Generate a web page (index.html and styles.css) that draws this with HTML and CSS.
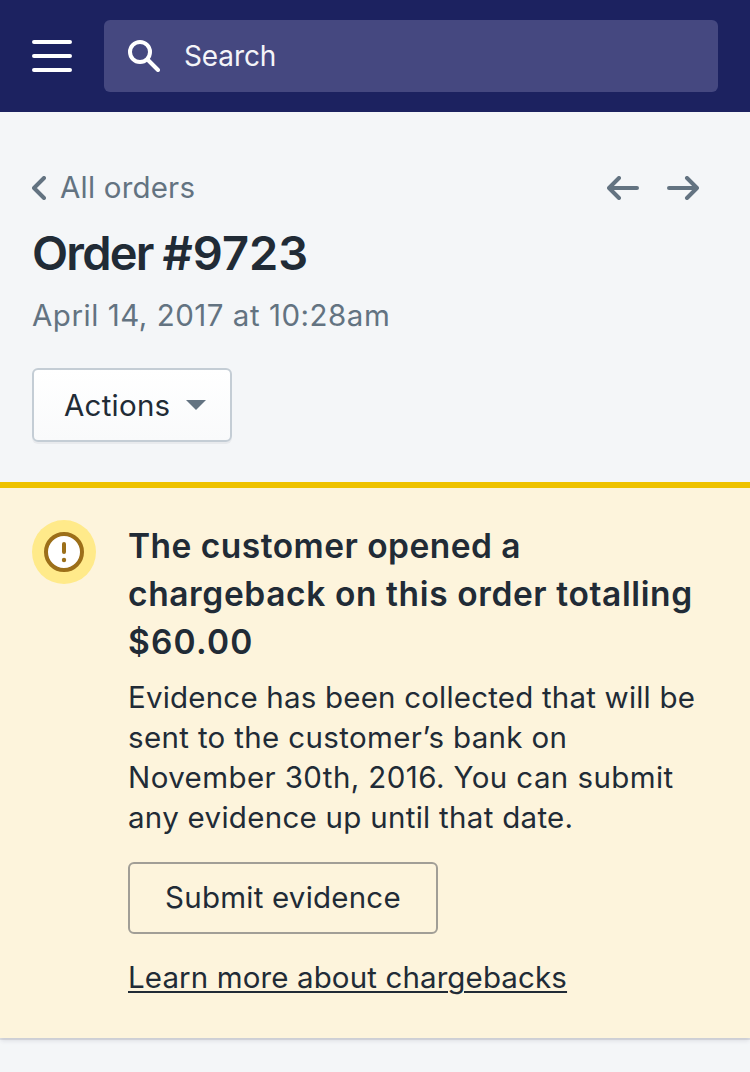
FILE: index.html
```html
<!DOCTYPE html>
<html lang="en">
<head>
<meta charset="utf-8">
<title>Order #9723</title>
<link rel="stylesheet" href="styles.css">
</head>
<body>
<header class="topbar">
  <svg class="menu" width="40" height="32" viewBox="0 0 40 32"><path d="M2 2h36M2 16h36M2 30h36" fill="none" stroke="#fff" stroke-width="4" stroke-linecap="round"/></svg>
  <div class="search">
    <svg width="32" height="32" viewBox="0 0 32 32" fill="none" stroke="#fff" stroke-width="4"><circle cx="12" cy="12" r="10"/><path d="M19.5 19.5L30 30" stroke-linecap="round"/></svg>
    <span class="search-label">Search</span>
  </div>
</header>
<main>
  <section class="page-header">
    <nav class="nav-row">
      <a class="back"><svg width="14" height="24" viewBox="0 0 14 24"><path d="M12 2L2 12l10 10" fill="none" stroke="#637381" stroke-width="4" stroke-linecap="round" stroke-linejoin="round"/></svg><span class="back-label">All orders</span></a>
      <div class="pager">
        <svg width="32" height="24" viewBox="0 0 32 24"><path d="M12 2L2 12l10 10M2 12h28" fill="none" stroke="#637381" stroke-width="4" stroke-linecap="round" stroke-linejoin="round"/></svg>
        <svg width="32" height="24" viewBox="0 0 32 24"><path d="M20 2l10 10-10 10M30 12H2" fill="none" stroke="#637381" stroke-width="4" stroke-linecap="round" stroke-linejoin="round"/></svg>
      </div>
    </nav>
    <h1 class="title">Order <span class="number">#9723</span></h1>
    <p class="date">April 14, 2017 at 10:28am</p>
    <button class="actions"><span class="actions-label">Actions</span><svg width="20" height="10" viewBox="0 0 20 10"><path d="M0 0h20L10 10z" fill="#637381"/></svg></button>
  </section>
  <section class="banner">
    <svg class="alert" width="64" height="64" viewBox="0 0 64 64"><circle cx="32" cy="32" r="32" fill="#ffea8a"/><circle cx="32" cy="32" r="18" fill="#fff" stroke="#9c6f19" stroke-width="4"/><path d="M32 24v8" stroke="#9c6f19" stroke-width="4" stroke-linecap="round"/><circle cx="32" cy="40" r="2.2" fill="#9c6f19"/></svg>
    <div class="content">
      <h2 class="heading"><span class="h-1">The customer opened a</span><br><span class="h-2">chargeback on this order totalling</span><br><span class="h-3">$60.00</span></h2>
      <p class="copy"><span class="c-1">Evidence has been collected that will be</span><br><span class="c-2">sent to the customer’s bank on</span><br><span class="c-3">November 30th, 2016. You can submit</span><br><span class="c-4">any evidence up until that date.</span></p>
      <button class="submit"><span class="submit-label">Submit evidence</span></button>
      <a class="learn">Learn more about chargebacks</a>
    </div>
  </section>
</main>
</body>
</html>
```
FILE: styles.css
```css
* { box-sizing: border-box; }
body { margin: 0; min-height: 1072px; background: #f4f6f8; color: #212b36; font-family: Inter, "Liberation Sans", sans-serif; font-size: 29.5px; letter-spacing: 0.25px; white-space: nowrap; }
svg { display: block; flex: none; }
h1, h2, p { margin: 0; }
button { font: inherit; letter-spacing: inherit; color: inherit; }
.topbar { height: 112px; padding: 20px 32px; display: flex; align-items: center; gap: 32px; background: #1c2260; }
.search { flex: 1; height: 72px; padding: 0 24px; display: flex; align-items: center; gap: 24px; border-radius: 6px; background: #454880; color: #f4f4f8; font-size: 28px; letter-spacing: -0.1px; }
.page-header { height: 370px; padding: 56px 32px 0; }
.nav-row { height: 40px; display: flex; align-items: center; justify-content: space-between; color: #637381; }
.back { display: flex; align-items: center; gap: 14px; letter-spacing: 0.2px; }
.back-label { padding-bottom: 3px; }
.pager { display: flex; gap: 28px; padding-right: 19px; }
.title { margin-top: 17px; font-size: 47px; line-height: 56px; font-weight: 600; letter-spacing: -1.8px; }
.number { letter-spacing: 0; }
.date { margin-top: 14px; line-height: 40px; color: #637381; letter-spacing: 0.52px; }
.actions { width: 200px; height: 74px; margin-top: 33px; padding: 0 24px 0 30px; display: flex; align-items: center; justify-content: space-between; border: 2px solid #c4cdd5; border-radius: 6px; background: linear-gradient(#fff, #f9fafb); box-shadow: 0 2px 0 rgba(22, 29, 37, .05); }
.banner { height: 556px; padding: 32px; display: flex; gap: 32px; border-top: 6px solid #eec200; background: #fdf4dc; box-shadow: 0 2px 0 rgba(63, 63, 90, .12), 0 4px 4px -1px rgba(63, 63, 90, .12); }
.content { padding-top: 2px; }
.heading { font-size: 33.5px; line-height: 48px; font-weight: 600; }
.h-1 { letter-spacing: 0.48px; }
.h-2 { letter-spacing: 0.62px; }
.h-3 { letter-spacing: 1.2px; }
.copy { margin-top: 11px; line-height: 40px; }
.c-1 { letter-spacing: 0.2px; }
.c-2 { letter-spacing: 0.35px; }
.c-3 { letter-spacing: 0.41px; }
.c-4 { letter-spacing: 0.29px; }
.submit { display: block; width: 310px; height: 72px; margin-top: 25px; padding: 0 0 3px; border: 2px solid #a19e96; border-radius: 6px; background: transparent; letter-spacing: 0.22px; }
.learn { display: block; margin-top: 23px; line-height: 40px; letter-spacing: 0.12px; text-decoration: underline; text-decoration-thickness: 2px; text-underline-offset: 3px; }
```
